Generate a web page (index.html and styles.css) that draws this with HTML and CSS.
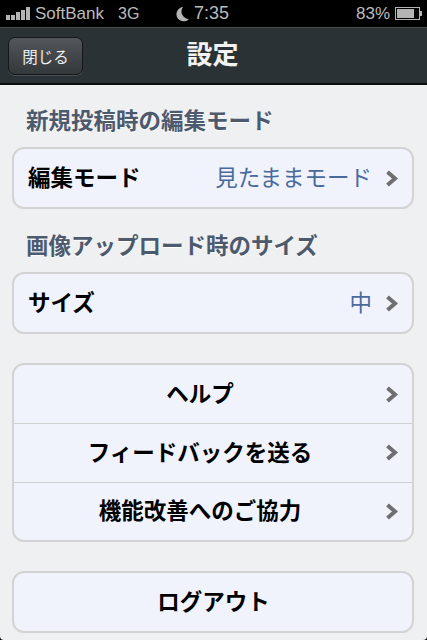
FILE: index.html
```html
<!DOCTYPE HTML>
<html lang="ja">
<head>
  <meta name="viewport" content="width=device-width, initial-scale=1">
  <title>設定</title>
  <link rel="stylesheet" href="styles.css">
</head>
<body>
  <div class="phone">
    <div class="statusbar">
      <div class="status-left">
        <span class="signal"><i class="b1"></i><i class="b2"></i><i class="b3"></i><i class="b4"></i><i class="b5"></i></span>
        <span class="carrier">SoftBank</span>
        <span class="network">3G</span>
      </div>
      <div class="status-mid">
        <svg class="moon" width="14" height="16" viewBox="0 0 14 16"><path d="M7 1 A7.2 7.2 0 1 0 13 13 A7.5 7.5 0 0 1 7 1 Z" fill="#b4b4b4"/></svg>
        <span>7:35</span>
      </div>
      <div class="status-right">
        <span>83%</span>
        <span class="battery"><span class="battery-fill"></span></span>
        <span class="battery-tip"></span>
      </div>
    </div>

    <div class="navbar">
      <button class="nav-button">閉じる</button>
      <div class="nav-title">設定</div>
    </div>

    <div class="content">
      <h2 class="section-title">新規投稿時の編集モード</h2>
      <div class="card">
        <div class="row">
          <span class="row-label">編集モード</span>
          <span class="row-value">見たままモード</span>
          <svg class="chevron" width="14" height="19" viewBox="0 0 14 19"><path d="M2.5 3 L10 9.5 L2.5 16" fill="none" stroke="#6f6f72" stroke-width="4"/></svg>
        </div>
      </div>

      <h2 class="section-title second">画像アップロード時のサイズ</h2>
      <div class="card">
        <div class="row">
          <span class="row-label">サイズ</span>
          <span class="row-value">中</span>
          <svg class="chevron" width="14" height="19" viewBox="0 0 14 19"><path d="M2.5 3 L10 9.5 L2.5 16" fill="none" stroke="#6f6f72" stroke-width="4"/></svg>
        </div>
      </div>

      <div class="card group">
        <div class="row center">
          <span class="row-label">ヘルプ</span>
          <svg class="chevron" width="14" height="19" viewBox="0 0 14 19"><path d="M2.5 3 L10 9.5 L2.5 16" fill="none" stroke="#6f6f72" stroke-width="4"/></svg>
        </div>
        <div class="row center">
          <span class="row-label">フィードバックを送る</span>
          <svg class="chevron" width="14" height="19" viewBox="0 0 14 19"><path d="M2.5 3 L10 9.5 L2.5 16" fill="none" stroke="#6f6f72" stroke-width="4"/></svg>
        </div>
        <div class="row center">
          <span class="row-label">機能改善へのご協力</span>
          <svg class="chevron" width="14" height="19" viewBox="0 0 14 19"><path d="M2.5 3 L10 9.5 L2.5 16" fill="none" stroke="#6f6f72" stroke-width="4"/></svg>
        </div>
      </div>

      <div class="card group">
        <div class="row center">
          <span class="row-label">ログアウト</span>
        </div>
      </div>
    </div>
  </div>
</body>
</html>
```

FILE: styles.css
```css
html, body {
  margin: 0;
  padding: 0;
  background-color: #000;
}

body {
  font-family: "Liberation Sans", "Noto Sans CJK JP", sans-serif;
}

.phone {
  width: 427px;
  height: 640px;
  overflow: hidden;
  display: flex;
  flex-direction: column;
  background-color: #eff0f2;
  border-radius: 0 0 4px 4px;
}

/* status bar */
.statusbar {
  height: 27px;
  flex: none;
  background-color: #000;
  color: #bbb;
  font-size: 17px;
  display: flex;
  align-items: center;
  padding: 0 5px 0 6px;
  position: relative;
}

.status-left {
  display: flex;
  align-items: center;
}

.signal {
  display: flex;
  align-items: flex-end;
  gap: 1px;
  height: 13px;
  margin-right: 5px;
}

.signal i {
  width: 4px;
  background-color: #b4b4b4;
}

.signal .b1 { height: 5px; }
.signal .b2 { height: 5px; }
.signal .b3 { height: 8px; }
.signal .b4 { height: 10px; }
.signal .b5 { height: 13px; }

.network {
  margin-left: 14px;
  font-size: 16px;
}

.status-mid {
  position: absolute;
  left: 176px;
  top: 0;
  height: 27px;
  display: flex;
  align-items: center;
  gap: 4px;
  font-size: 18px;
}

.status-right {
  margin-left: auto;
  display: flex;
  align-items: center;
}

.battery {
  width: 21px;
  height: 9px;
  border: 1px solid #b4b4b4;
  padding: 1px;
  margin-left: 5px;
  display: block;
}

.battery-fill {
  display: block;
  width: 17px;
  height: 9px;
  background-color: #b4b4b4;
}

.battery-tip {
  width: 2px;
  height: 5px;
  background-color: #b4b4b4;
}

/* nav bar */
.navbar {
  box-sizing: border-box;
  height: 58px;
  flex: none;
  background-color: #2a3235;
  border-top: 1px solid #4a4f52;
  border-bottom: 2px solid #0c0e0f;
  display: flex;
  align-items: center;
  position: relative;
  padding-left: 8px;
}

.nav-button {
  width: 75px;
  height: 38px;
  padding: 0;
  border: 1px solid #14181a;
  border-radius: 7px;
  background: linear-gradient(#53565a, #33383b);
  box-shadow: 0 1px 0 #4a5053;
  color: #eee;
  font-family: inherit;
  font-size: 15.5px;
  font-weight: 400;
}

.nav-title {
  position: absolute;
  left: 0;
  right: 2px;
  top: 10px;
  text-align: center;
  color: #f2f2f2;
  font-size: 26px;
  font-weight: 700;
  line-height: 34px;
}

/* grouped list */
.content {
  flex: 1;
  padding: 21px 13px 0 12px;
}

.section-title {
  margin: 0 0 10px 14px;
  color: #4d5a6e;
  font-size: 22.5px;
  font-weight: 700;
  line-height: 31px;
  text-shadow: 0 1px 0 #fff;
}

.section-title.second {
  margin-top: 22px;
}

.card {
  background-color: #f0f3fb;
  border: 2px solid #d3d3d4;
  border-radius: 12px;
}

.card.group {
  margin-top: 29px;
}

.row {
  box-sizing: border-box;
  height: 58px;
  display: flex;
  align-items: center;
  padding: 0 13px 0 14px;
}

.row + .row {
  height: 58.5px;
  border-top: 1px solid #cfd0d2;
}

.row-label {
  color: #000;
  font-size: 22.5px;
  font-weight: 700;
  padding-bottom: 4px;
}

.row-value {
  margin-left: auto;
  color: #4a6a9c;
  font-size: 22.5px;
  padding-bottom: 4px;
}

.chevron {
  flex: none;
  margin-left: 13px;
}

.row.center .row-label {
  flex: 1;
  text-align: center;
}
```
